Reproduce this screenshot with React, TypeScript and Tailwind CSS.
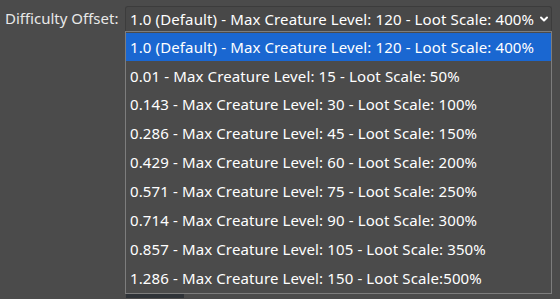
import { ChevronDown } from "lucide-react";

const options = [
  "1.0 (Default) - Max Creature Level: 120 - Loot Scale: 400%",
  "0.01 - Max Creature Level: 15 - Loot Scale: 50%",
  "0.143 - Max Creature Level: 30 - Loot Scale: 100%",
  "0.286 - Max Creature Level: 45 - Loot Scale: 150%",
  "0.429 - Max Creature Level: 60 - Loot Scale: 200%",
  "0.571 - Max Creature Level: 75 - Loot Scale: 250%",
  "0.714 - Max Creature Level: 90 - Loot Scale: 300%",
  "0.857 - Max Creature Level: 105 - Loot Scale: 350%",
  "1.286 - Max Creature Level: 150 - Loot Scale:500%",
];

export default function App() {
  return (
    <div
      className="w-[560px] h-[299px] overflow-hidden bg-[#4b4b4b] text-white text-[15px] flex"
      style={{ fontFamily: '"Noto Sans", "Open Sans", sans-serif' }}
    >
      <div className="w-[125px] shrink-0 pl-[5px] pt-[6px] leading-[24px] text-[#e8e8e8]">
        Difficulty Offset:
      </div>
      <div className="w-[427px] shrink-0 pt-[6px] flex flex-col tracking-[0.12px]">
        {/* Select box */}
        <div className="h-[25px] rounded-t-[3px] border border-b-0 border-[#3c3c3c] bg-[#484848] flex items-center pl-[4px] pr-[4px] leading-none">
          <span className="flex-1 whitespace-nowrap">{options[0]}</span>
          <ChevronDown className="w-[12px] h-[12px] shrink-0 ml-[4px]" strokeWidth={4} />
        </div>
        {/* Open list */}
        <div className="border border-[#7d7d7d] bg-[#4b4b4b] w-[427px] pt-[0.5px]">
          {options.map((o, i) => (
            <div
              key={o}
              className={`h-[28.9px] flex items-center pl-[4px] whitespace-nowrap ${
                i === 0 ? "bg-[#1a67d1]" : ""
              }`}
            >
              {o}
            </div>
          ))}
        </div>
        <div className="ml-[1px] w-[58px] h-[4px] bg-[#2f3338]" />
      </div>
    </div>
  );
}
